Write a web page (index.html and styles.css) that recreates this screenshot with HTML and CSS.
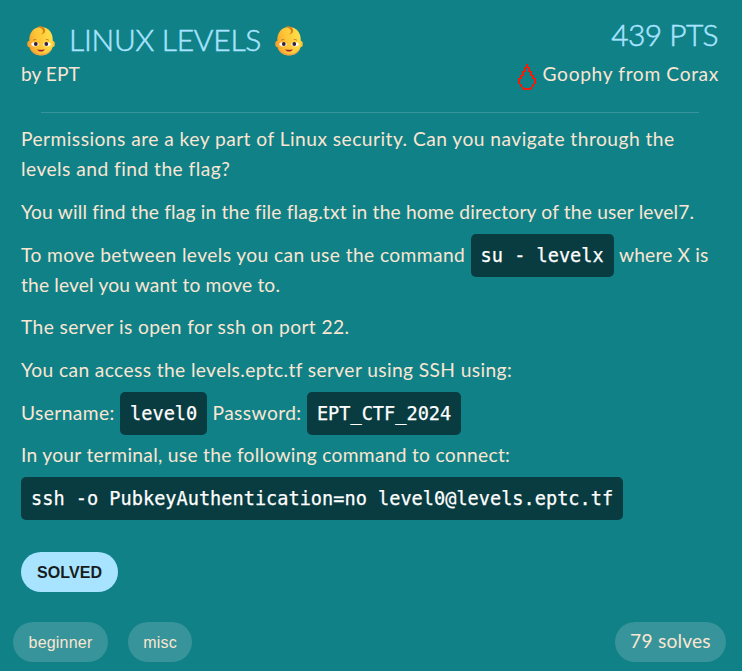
FILE: index.html
```html
<!DOCTYPE html>
<html lang="en">
<head>
<meta charset="utf-8">
<title>Linux Levels</title>
<link rel="stylesheet" href="styles.css">
</head>
<body>
<svg class="defs" width="0" height="0" aria-hidden="true">
  <defs>
    <linearGradient id="skin" x1="0" y1="0.6" x2="1" y2="0.3">
      <stop offset="0" stop-color="#f9a62b"/>
      <stop offset="0.35" stop-color="#ffc436"/>
      <stop offset="1" stop-color="#ffe04a"/>
    </linearGradient>
    <symbol id="baby" viewBox="0 0 28 31">
      <ellipse cx="2.8" cy="19" rx="2.6" ry="3.2" fill="#f5a12d"/>
      <ellipse cx="25.2" cy="19" rx="2.6" ry="3.2" fill="#ffc234"/>
      <path d="M14 2C6.5 2 2.3 8 2.3 14.5V20c0 6.300 5 10.500 11.700 10.500S25.700 26.300 25.700 20v-5.500C25.700 8 21.500 2 14 2Z" fill="url(#skin)"/>
      <path d="M3 22c1.200 5.500 5.500 8.500 11 8.500s9.800-3 11-8.500c-2 4.500-6 7-11 7S5 26.500 3 22Z" fill="#f28a4c" opacity=".6"/>
      <path d="M10.500 1.800c3.600-1.700 7.600.2 7.600 3.700 0 2.200-1.500 3.700-3.900 3.900 1.500-1.200 2-2.400 1.600-3.800-.5-1.900-2.600-2.900-5.300-3.800Z" fill="#d98218"/>
      <path d="M6 15.500c.9-.9 2-1.200 3.200-.9M18.800 14.600c1.200-.3 2.300 0 3.200.9" fill="none" stroke="#c77725" stroke-width="1"/>
      <ellipse cx="8" cy="19.300" rx="3.600" ry="2.100" fill="#fff"/>
      <ellipse cx="20" cy="19.300" rx="3.600" ry="2.100" fill="#fff"/>
      <circle cx="8.800" cy="19" r="1.900" fill="#352234"/>
      <circle cx="19.300" cy="19" r="1.900" fill="#352234"/>
      <path d="M10.300 24.200c2.300.8 5.100.8 7.400 0-.5 1.700-1.900 2.400-3.700 2.400s-3.200-.7-3.700-2.400Z" fill="#a51d35"/>
    </symbol>
  </defs>
</svg>
<main class="card">
  <header class="head">
    <div>
      <h1 class="title"><svg class="baby"><use href="#baby"/></svg><span class="name">LINUX LEVELS</span><svg class="baby"><use href="#baby"/></svg></h1>
      <div class="author">by EPT</div>
    </div>
    <div class="score">
      <div class="points">439 PTS</div>
      <div class="blood">
        <svg class="drop" viewBox="0 0 18 26" shape-rendering="crispEdges"><path d="M8 0h2v3h2v4h2v4h2v3h2v6h-2v3h-2v2h-1v1H5v-1H4v-2H2v-3H0v-6h2v-3h2V7h2V3h2zM8 4v4H6v4H4v3H2v5h2v3h2v1h6v-1h2v-3h2v-5h-2v-3h-2V8h-2V4z" fill="#f01c0a"/></svg>
        <span class="winner">Goophy from Corax</span>
      </div>
    </div>
  </header>
  <hr class="rule">
  <section class="body">
    <p class="intro">Permissions are a key part of Linux security. Can you navigate through the levels and find the flag?</p>
    <p class="file">You will find the flag in the file flag.txt in the home directory of the user level7.</p>
    <p class="move">To move between levels you can use the command <code>su - levelx</code> <span class="tail">where X is<br>the level you want to move to.</span></p>
    <p class="port">The server is open for ssh on port 22.</p>
    <p class="access">You can access the levels.eptc.tf server using SSH using:</p>
    <p class="login">Username: <code>level0</code> Password: <code>EPT_CTF_2024</code></p>
    <p class="connect">In your terminal, use the following command to connect:</p>
    <p><code>ssh -o PubkeyAuthentication=no level0@levels.eptc.tf</code></p>
  </section>
  <button class="solved">SOLVED</button>
  <footer class="tags">
    <span class="tag beginner">beginner</span>
    <span class="tag misc">misc</span>
    <span class="tag solves">79 solves</span>
  </footer>
</main>
</body>
</html>
```
FILE: styles.css
```css
* { box-sizing: border-box; }
html, body { margin: 0; height: 100%; overflow: hidden; }
body {
  background: #118188;
  color: #fae6d2;
  font: 400 19.2px/30px Lato, "Liberation Sans", sans-serif;
}
.defs { display: block; }
.card { height: 671px; padding: 20px 21px 0; }
.head { display: flex; justify-content: space-between; height: 92px; }
.title {
  display: flex;
  align-items: center;
  height: 39px;
  margin: 0;
  padding-left: 6px;
  color: #a8e4ff;
  font-size: 30px;
  font-weight: 300;
  white-space: nowrap;
}
.name, .points { -webkit-text-stroke: 0.5px #a8e4ff; }
.baby { width: 28px; height: 31px; margin-top: 1px; }
.name { width: 192px; margin: -2px 14px 0; letter-spacing: -0.25px; }
.author { line-height: 30px; }
.score { padding-right: 2px; text-align: right; }
.points { height: 39px; padding-right: 1px; color: #a8e4ff; font-size: 30px; font-weight: 300; line-height: 29px; letter-spacing: -0.6px; }
.blood { display: flex; justify-content: flex-end; white-space: nowrap; letter-spacing: 0.64px; }
.winner { width: 178px; margin-left: 5px; }
.drop { flex: none; width: 18px; height: 26px; margin-top: 5px; }
.rule { height: 1px; margin: 0 22px 11.35px 20px; border: 0; background: #37949a; }
.body { height: 427.65px; }
.body p { margin: 0 0 12.67px; white-space: nowrap; }
.body .intro { white-space: normal; letter-spacing: 0.47px; }
.file { letter-spacing: 0.18px; }
.move { letter-spacing: 0.41px; }
.tail { letter-spacing: 0.16px; }
.port { letter-spacing: 0.39px; }
.access { letter-spacing: 0.39px; }
.login { letter-spacing: 0.41px; }
.connect { letter-spacing: 0.3px; }
code {
  padding: 11px 10px;
  border-radius: 5px;
  background: #083c41;
  color: #fff;
  font: 18.6px "DejaVu Sans Mono", monospace;
  letter-spacing: 0;
  -webkit-text-stroke: 0.25px #fff;
}
.solved {
  display: block;
  width: 97px;
  height: 40px;
  padding: 2px 0 0;
  border: 0;
  border-radius: 20px;
  background: #a8e4ff;
  color: #161c20;
  font: bold 16px "Liberation Sans", sans-serif;
  letter-spacing: 0.1px;
}
.tags { display: flex; gap: 20px; margin: 30px -5px 0 -8px; }
.tag {
  height: 40px;
  border-radius: 20px;
  background: #37949a;
  font: 16px/42px "Liberation Sans", sans-serif;
  letter-spacing: 0.2px;
  text-align: center;
}
.beginner { width: 95px; }
.misc { width: 64px; }
.solves { width: 111px; margin-left: auto; font: 19.2px/38px Lato, sans-serif; }
```
